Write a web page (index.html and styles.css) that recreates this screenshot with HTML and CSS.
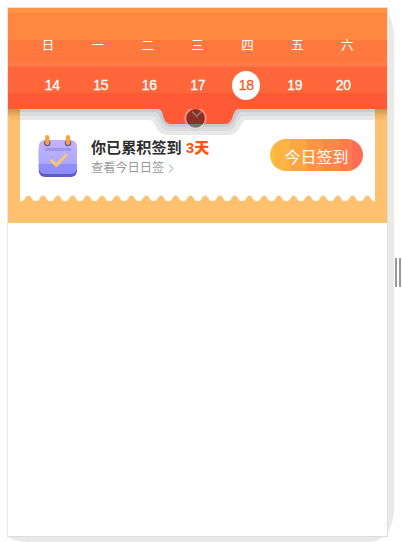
FILE: index.html
```html
<!DOCTYPE html>
<html lang="zh-CN">
<head>
<meta charset="UTF-8">
<title>今日签到</title>
<link rel="stylesheet" href="styles.css">
</head>
<body>
<div class="device">
<main class="screen">
  <header class="calendar">
    <div class="weekdays"><span>日</span><span>一</span><span>二</span><span>三</span><span>四</span><span>五</span><span>六</span></div>
    <div class="dates"><span>14</span><span>15</span><span>16</span><span>17</span><span class="today">18</span><span>19</span><span>20</span></div>
  </header>
  <section class="panel">
    <svg class="edge" width="355" height="7" viewBox="0 0 355 7">
      <defs><pattern id="wave" x="1" width="14.74" height="7" patternUnits="userSpaceOnUse"><path d="M0 0V6.2C4.2 6.2 4 .4 7.37 .4S10.5 6.2 14.74 6.2V0Z" fill="#fff"/></pattern></defs>
      <rect width="355" height="7" fill="url(#wave)"/>
    </svg>
    <svg class="pull" width="379" height="30" viewBox="0 0 379 30">
      <defs><linearGradient id="side" x1="0" y1="0" x2="0" y2="1"><stop stop-color="#a67736" stop-opacity=".65"/><stop offset="1" stop-color="#ffc16d" stop-opacity="0"/></linearGradient></defs>
      <path d="M0 0H12V15Q4 13 0 6ZM367 0H379V6Q375 13 367 15Z" fill="url(#side)"/>
      <path d="M12 0H367V11H239Q235 11 233 16C229 24 226 26 219 26H162C154 26 151 24 147 16Q145 11 140 11H12Z" fill="#e8e8e9"/>
      <path d="M12 0H367V7H236Q231 7 229 13C226 20 223 22 217 22H164C157 22 154 20 151 13Q148 7 144 7H12Z" fill="#dadbdd"/>
      <path d="M12 0H367V3H233Q229 4 227 10Q224 18 217 18H164Q156 18 153 10Q151 4 147 3H12Z" fill="#c8cacd"/>
      <path d="M150 0C157 0 153 15 163 15H217C227 15 223 0 231 0Z" fill="#ff5a35"/>
      <circle cx="187.5" cy="9.3" r="10.2" fill="#8b3022" stroke="#fb9484" stroke-width="1.8"/>
      <path d="M179.3 15H195.7Q187.5 23 179.3 15Z" fill="#777776"/>
      <path d="M179.3 15.5A10.4 10.4 0 0 0 195.7 15.5" fill="none" stroke="#e3dfde" stroke-width="1.6"/>
      <path d="m184 2.5 4.7 4.7 4.7-4.7" fill="none" stroke="#95706b" stroke-width="1.7"/>
    </svg>
    <div class="card">
      <svg class="icon" width="40" height="43" viewBox="0 0 40 43">
        <defs><linearGradient id="cal" x1="0" y1="0" x2="0" y2="1"><stop stop-color="#c5b3fa"/><stop offset=".5" stop-color="#b3acfb"/><stop offset=".7" stop-color="#aaa7fb"/><stop offset=".72" stop-color="#918ffa"/><stop offset="1" stop-color="#8c8bfa"/></linearGradient></defs>
        <rect x=".8" y="8" width="38.2" height="34" rx="6" fill="#5e5dbb"/>
        <rect x=".8" y="5" width="38.2" height="34" rx="6" fill="url(#cal)"/>
        <rect x="6.5" y="13" width="27" height="3" rx="1.5" fill="#a194f0"/>
        <circle cx="9.3" cy="8" r="3.2" fill="#62548b"/><circle cx="30" cy="8" r="3.2" fill="#62548b"/>
        <rect x="7.2" y="0" width="4.2" height="10" rx="2.1" fill="#f8a43b"/><rect x="27.9" y="0" width="4.2" height="10" rx="2.1" fill="#f8a43b"/>
        <path d="m13.5 25.5 5 5 9.5-10.5" fill="none" stroke="#ffc46e" stroke-width="3" stroke-linecap="round" stroke-linejoin="round"/>
      </svg>
      <div class="summary">
        <div class="title">你已累积签到 <b>3天</b></div>
        <div class="link">查看今日日签<svg width="6" height="9" viewBox="0 0 6 9"><path d="m1 .5 4 4-4 4" fill="none" stroke="#999"/></svg></div>
      </div>
      <button class="checkin">今日签到</button>
    </div>
  </section>
</main>
</div>
<div class="handle"></div>
</body>
</html>
```
FILE: styles.css
```css
* { box-sizing: border-box; }
html, body { height: 100%; }
body {
  margin: 0;
  padding: 7px 0 0 7px;
  overflow: hidden;
  display: flex;
  align-items: flex-start;
  background: #fefefe;
  font-family: "Liberation Sans", "Noto Sans CJK SC", sans-serif;
}
.device {
  width: 387px;
  height: 535px;
  flex: none;
  background: #e9e9e9;
  border-radius: 0 14px 24px 24px / 0 32px 32px 8px;
}
.screen {
  width: 381px;
  height: 530px;
  border: 1px solid #ddd;
  border-left-color: #e7e7e7;
  border-top-color: #e2e2e6;
  background: #fefefe;
}
.calendar {
  height: 101px;
  color: #fff;
  background: linear-gradient(#ff9444 5px, #ff8841 5px 32px, #ff783e 32px 55px, #ff7f50 55px 57px, #ff743d 57px 59px, #ff673a 59px 85px, #ff5a35 85px);
}
.weekdays {
  display: grid;
  grid-template-columns: repeat(7, 49.9px);
  padding: 28px 0 0 15px;
  font-size: 12.5px;
  line-height: 20px;
  text-align: center;
}
.dates {
  display: grid;
  grid-template-columns: repeat(7, 48.5px);
  justify-items: center;
  padding: 15px 0 0 20px;
  font-size: 14px;
  line-height: 29px;
  text-align: center;
  letter-spacing: -0.4px;
  -webkit-text-stroke: 0.3px currentColor;
}
.dates span { width: 28px; height: 29px; }
.dates .today {
  border-radius: 50%;
  background: #fff;
  color: #f15a24;
}
.panel {
  position: relative;
  height: 114px;
  padding: 0 12px;
  background: #ffc16d;
}
.pull { position: absolute; left: 0; top: 0; }
.edge { position: absolute; left: 12px; top: 86px; }
.card {
  display: flex;
  height: 86px;
  padding: 26px 12px 0 18px;
  background: #fff;
}
.icon { flex: none; }
.summary { margin-left: 13px; padding-top: 3px; white-space: nowrap; }
.title {
  font-size: 15.1px;
  line-height: 20px;
  font-weight: bold;
  color: #2d2d2d;
}
.title b { color: #ff5310; }
.link {
  display: flex;
  align-items: center;
  gap: 4px;
  font-size: 12.2px;
  line-height: 20px;
  color: #999;
}
.checkin {
  width: 93px;
  height: 32px;
  margin: 4px 0 0 auto;
  padding: 1px 0 0;
  border: 0;
  border-radius: 16px;
  background: linear-gradient(90deg, #ffc03a 4px, #ffb443 4px 20px, #ffa541 20px 37px, #ff9444 37px 53px, #ff8848 53px 70px, #ff7b4e 70px 82px, #ff6d54 82px);
  color: #fff;
  font: 16px "Liberation Sans", "Noto Sans CJK SC", sans-serif;
}
.handle {
  width: 6px;
  height: 29px;
  margin: 251px 0 0 1px;
  border-left: 2px solid #999;
  border-right: 2px solid #999;
}
```
